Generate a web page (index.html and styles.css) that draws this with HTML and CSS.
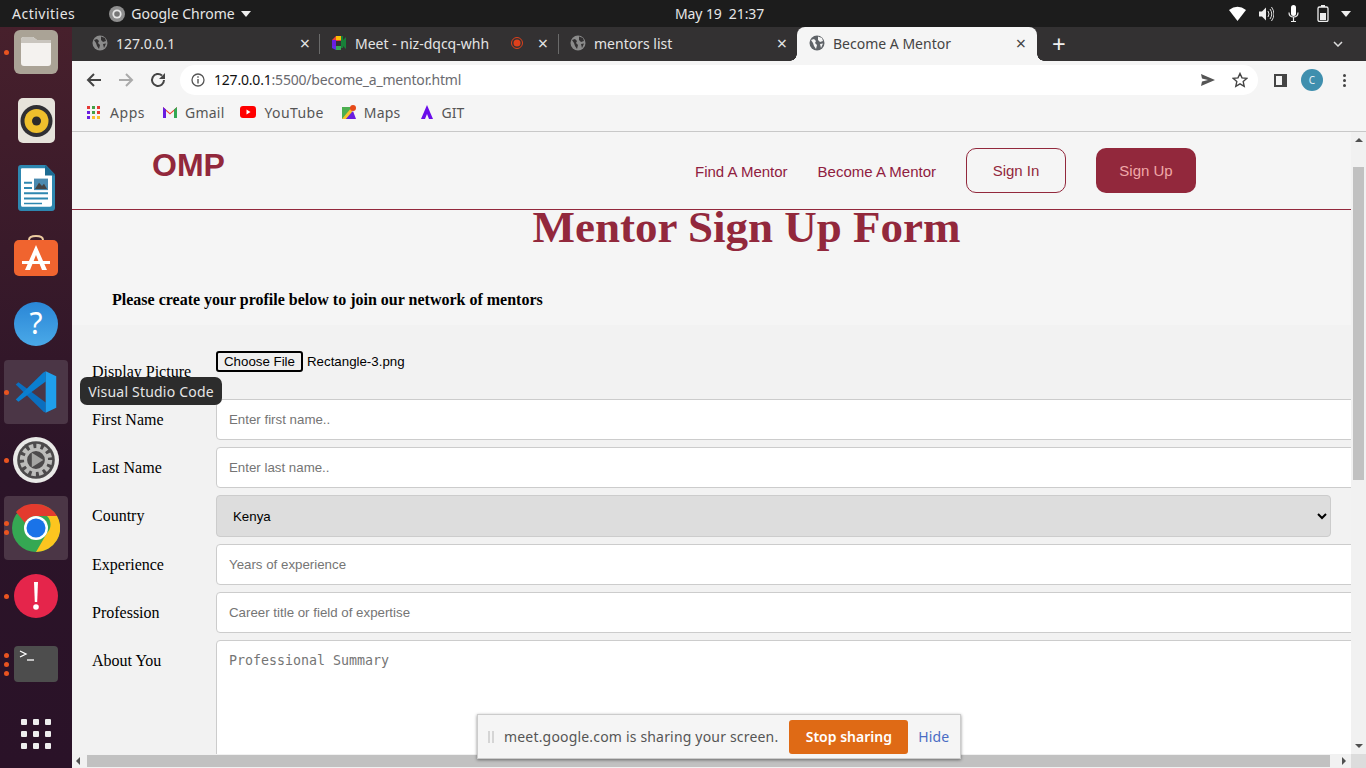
FILE: index.html
```html
<!DOCTYPE html>
<html lang="en">
<head>
<meta charset="utf-8">
<title>Become A Mentor</title>
<link rel="stylesheet" href="styles.css">
</head>
<body>
<header class="topbar">
  <div class="top-left">
    <span class="activities">Activities</span>
    <span class="appname">
      <svg class="chrome-mono" viewBox="0 0 16 16"><circle cx="8" cy="8" r="8" fill="#8e8e8e"/><circle cx="8" cy="8" r="4.6" fill="#e8e8e8"/><circle cx="8" cy="8" r="2.8" fill="#777"/></svg>
      Google Chrome
      <svg class="caret" viewBox="0 0 10 6"><path d="M0 0h10L5 6z" fill="#eee"/></svg>
    </span>
  </div>
  <div class="clock">May 19&nbsp; 21:37</div>
  <div class="tray">
    <svg class="t-wifi" width="17" height="15" viewBox="0 0 17 15"><path d="M0 4Q8.500-2.500 17 4L8.500 15z" fill="#fff"/></svg>
    <svg class="t-vol" width="16" height="18" viewBox="0 0 16 18"><path d="M1 6.500h3L8 2.500v13L4 11.500H1z" fill="#eee"/><path d="M10 6q2 3 0 6M12 4q3.500 5 0 10M13.500 2q5 7 0 14" fill="none" stroke="#ddd" stroke-width="1"/></svg>
    <svg class="t-mic" width="11" height="17" viewBox="0 0 11 17"><rect x="3" y="0" width="5" height="11" rx="2.500" fill="#fff"/><path d="M1 7.500q0 4.500 4.500 4.500T10 7.500M5.500 12V16M3 16.500h5" fill="none" stroke="#eee" stroke-width="1.200"/></svg>
    <svg class="t-bat" width="12" height="17" viewBox="0 0 12 17"><rect x="1" y="2" width="10" height="14.500" rx="1.500" fill="none" stroke="#eee" stroke-width="1.300"/><rect x="4" y="0" width="4" height="2" fill="#eee"/><rect x="3" y="8" width="6" height="7" fill="#eee"/></svg>
    <svg class="caret t-caret" viewBox="0 0 10 6"><path d="M0 0h10L5 6z" fill="#eee"/></svg>
  </div>
</header>

<div class="desktop">
  <nav class="dock">
    <div class="dock-item"><i class="dots"><b></b></i>
      <svg width="44" height="44" viewBox="0 0 44 44"><rect width="44" height="44" rx="6" fill="#aaa396"/><path d="M7 10q0-3 3-3h9l4 3h11q3 0 3 3v20q0 3-3 3H10q-3 0-3-3z" fill="#f4f2ef"/><path d="M7 10q0-3 3-3h9l4 3h14v3H7z" fill="#c9c5be"/></svg>
    </div>
    <div class="dock-item">
      <svg width="37" height="45" viewBox="0 0 37 45"><rect width="37" height="45" rx="5" fill="#e6e3db"/><circle cx="18.500" cy="23" r="16" fill="#2f2f33"/><circle cx="18.500" cy="23" r="12" fill="#eebf2c"/><circle cx="18.500" cy="23" r="4.500" fill="#2b2b2b"/></svg>
    </div>
    <div class="dock-item">
      <svg width="37" height="46" viewBox="0 0 37 44" preserveAspectRatio="none"><path d="M3 0h25l9 9v32q0 3-3 3H3q-3 0-3-3V3q0-3 3-3z" fill="#2e87b0"/><path d="M4 3h23l7 7v28q0 2-2 2H4q-1 0-1-2V4q0-1 1-1z" fill="#fff"/><path d="M27 0l10 9v1H27z" fill="#1c6b92"/><path d="M6 16h8v2H6zM6 21h8v2H6zM6 26h24v2H6zM6 31h24v2H6zM6 36h18v1.500H6z" fill="#2e87b0"/><rect x="16" y="13" width="14" height="11" fill="#4a8ab0"/><path d="M17 23l4-6 3 3 2-2 3 5z" fill="#444"/></svg>
    </div>
    <div class="dock-item">
      <svg width="44" height="44" viewBox="0 0 44 44"><path d="M15 9V6q0-4 7-4t7 4v3" fill="none" stroke="#eccba0" stroke-width="2"/><rect y="6" width="44" height="36" rx="5" fill="#f0642f"/><path d="M22 11L11 36h5l6-15 6 15h5z" fill="#fff"/><path d="M8 27h28v3H8z" fill="#fff"/></svg>
    </div>
    <div class="dock-item">
      <svg width="44" height="44" viewBox="0 0 44 44"><defs><linearGradient id="helpg" x1="0" y1="0" x2="0" y2="1"><stop offset="0" stop-color="#2a86d6"/><stop offset="1" stop-color="#4aa9e8"/></linearGradient></defs><circle cx="22" cy="22" r="22" fill="url(#helpg)"/><text x="22" y="32" class="q-mark">?</text></svg>
    </div>
    <div class="dock-item active"><i class="dots"><b></b></i>
      <svg width="44" height="44" viewBox="0 0 100 100"><path d="M4 33l6-5 62 46v23l-6-3z" fill="#0b6fbf"/><path d="M72 3v23L10 72l-6-5L66 6z" fill="#0a7fd0"/><path d="M72 3l24 11v72L72 97z" fill="#1f9fec"/></svg>
    </div>
    <div class="dock-item"><i class="dots"><b></b></i>
      <svg width="46" height="46" viewBox="0 0 44 44"><circle cx="22" cy="22" r="22" fill="#e9e9e7"/><circle cx="22" cy="22" r="18" fill="#4c4a4b"/><circle cx="22" cy="22" r="13" fill="none" stroke="#bcbcba" stroke-width="5" stroke-dasharray="4 2.800"/><circle cx="22" cy="22" r="10" fill="none" stroke="#bcbcba" stroke-width="3"/><path d="M18 15l11 7-11 7z" fill="#a5a5a3"/></svg>
    </div>
    <div class="dock-item active"><i class="dots"><b></b><b></b></i>
      <svg width="48" height="48" viewBox="0 0 48 48"><circle cx="24" cy="24" r="24" fill="#35a853"/><path d="M24 0a24 24 0 0 1 21 12H24a12 12 0 0 0-11 7L4 8A24 24 0 0 1 24 0z" fill="#e33b2e"/><path d="M45 12a24 24 0 0 1-21 36l11-19a12 12 0 0 0 0-17z" fill="#fcc51f"/><circle cx="24" cy="24" r="12" fill="#fff"/><circle cx="24" cy="24" r="9.500" fill="#1a73e8"/></svg>
    </div>
    <div class="dock-item"><i class="dots"><b></b></i>
      <svg width="44" height="44" viewBox="0 0 44 44"><circle cx="22" cy="22" r="22" fill="#e5254b"/><path d="M20 8h4l-.8 20h-2.400z" fill="#fff"/><circle cx="22" cy="33" r="2.800" fill="#fff"/></svg>
    </div>
    <div class="dock-item"><i class="dots"><b></b><b></b><b></b></i>
      <svg width="44" height="36" viewBox="0 0 44 36"><rect width="44" height="36" rx="4" fill="#4d4d4d"/><path d="M6 5l6 3-6 3" fill="none" stroke="#fff" stroke-width="1.300"/><path d="M13 14h7" stroke="#fff" stroke-width="1.300"/></svg>
    </div>
    <div class="grid-apps"><b></b><b></b><b></b><b></b><b></b><b></b><b></b><b></b><b></b></div>
  </nav>

  <main class="chrome">
    <div class="tabstrip">
      <div class="tab"><svg class="globe"><use href="#globe"/></svg><span class="tab-title">127.0.0.1</span><span class="x">×</span></div>
      <div class="tab sep"><svg class="favicon" viewBox="0 0 16 16"><path d="M1 5l4-4h5v5H1z" fill="#ea4335"/><path d="M1 5h4v6H1z" fill="#6a1de0"/><path d="M1 11h4v4H5l-4-2z" fill="#5f2ce6"/><path d="M5 11h5v4H5z" fill="#34a853"/><path d="M10 1h2v4l3-3v12l-3-3v2h-2z" fill="#188038"/><path d="M5 1h5v4H5z" fill="#fbbc04"/></svg><span class="tab-title">Meet - niz-dqcq-whh</span><svg class="rec" viewBox="0 0 12 12"><circle cx="6" cy="6" r="5.500" fill="none" stroke="#e0401b"/><circle cx="6" cy="6" r="3.500" fill="#e0401b"/></svg><span class="x">×</span></div>
      <div class="tab sep"><svg class="globe"><use href="#globe"/></svg><span class="tab-title">mentors list</span><span class="x">×</span></div>
      <div class="tab current"><svg class="globe"><use href="#globe"/></svg><span class="tab-title">Become A Mentor</span><span class="x">×</span></div>
      <span class="newtab">+</span>
      <svg class="tab-menu" viewBox="0 0 10 6"><path d="M1 1l4 4 4-4" fill="none" stroke="#ddd" stroke-width="1.500"/></svg>
    </div>

    <div class="toolbar">
      <svg class="tool" viewBox="0 0 16 16"><path d="M15 8H2M8 2L2 8l6 6" fill="none" stroke="#444" stroke-width="2"/></svg>
      <svg class="tool" viewBox="0 0 16 16"><path d="M1 8h13M8 2l6 6-6 6" fill="none" stroke="#aaa" stroke-width="2"/></svg>
      <svg class="tool" viewBox="0 0 16 16"><path d="M14 8a6 6 0 1 1-2-4.500" fill="none" stroke="#444" stroke-width="2"/><path d="M15 1v6H9z" fill="#444"/></svg>
      <div class="omnibox">
        <svg class="info" viewBox="0 0 14 14"><circle cx="7" cy="7" r="6" fill="none" stroke="#555" stroke-width="1.300"/><path d="M6.300 6h1.400v4.500H6.300zM6.300 3.300h1.400v1.400H6.300z" fill="#555"/></svg>
        <span class="url"><span class="host">127.0.0.1</span>:5500/become_a_mentor.html</span>
        <svg class="send" viewBox="0 0 16 14"><path d="M1 1l14 6-14 6 1-4.500L8 7 2 5.500z" fill="#555"/></svg>
        <svg class="star" viewBox="0 0 16 16"><path d="M8 1.500l2 4.400 4.700.5-3.500 3.200 1 4.700L8 11.900l-4.200 2.400 1-4.700L1.300 6.400 6 5.900z" fill="none" stroke="#444" stroke-width="1.400"/></svg>
      </div>
      <span class="sidepanel"></span>
      <span class="avatar">C</span>
      <span class="kebab"><b></b><b></b><b></b></span>
    </div>

    <div class="bookmarks">
      <span class="bm bm-apps"><span class="apps-icon"><b></b><b></b><b></b><b></b><b></b><b></b><b></b><b></b><b></b></span>Apps</span>
      <span class="bm bm-gmail"><svg class="bm-ic" viewBox="0 0 16 14"><path d="M1 13V2l7 6 7-6v11h-3V6L8 9.500 4 6v7z" fill="#ea4335"/><path d="M1 13V2l3 2.500V13z" fill="#6a1de0"/><path d="M12 13V4.500L15 2v11z" fill="#34a853"/></svg>Gmail</span>
      <span class="bm bm-you"><svg class="bm-yt" viewBox="0 0 16 12"><rect width="16" height="12" rx="3" fill="#f00"/><path d="M6.500 3.500v5l4-2.500z" fill="#fff"/></svg>YouTube</span>
      <span class="bm bm-maps"><svg class="bm-ic" viewBox="0 0 16 16"><path d="M1 3h10v12H1z" fill="#4caf50"/><path d="M1 15L11 3v5l-6 7z" fill="#fbc02d"/><path d="M5 15l7-8 3 8z" fill="#6a1de0"/><circle cx="12" cy="4" r="3" fill="#e64a19"/></svg>Maps</span>
      <span class="bm bm-git"><svg class="bm-ic" viewBox="0 0 16 16"><path d="M8 1l6 14h-4L8 10l-2 5H2z" fill="#6a0dea"/></svg>GIT</span>
    </div>

    <div class="viewport">
      <div class="page">
        <div class="site-nav">
          <span class="logo">OMP</span>
          <div class="nav-links">
            <a class="nav-link">Find A Mentor</a>
            <a class="nav-link">Become A Mentor</a>
            <a class="btn btn-outline">Sign In</a>
            <a class="btn btn-solid">Sign Up</a>
          </div>
        </div>
        <h1 class="title">Mentor Sign Up Form</h1>
        <h4 class="intro">Please create your profile below to join our network of mentors</h4>
        <form class="form">
          <div class="row row-file">
            <label class="lbl">Display Picture</label>
            <div class="file"><button type="button" class="file-btn">Choose File</button><span class="file-name">Rectangle-3.png</span></div>
          </div>
          <div class="row"><label class="lbl">First Name</label><input class="field" placeholder="Enter first name.."></div>
          <div class="row"><label class="lbl">Last Name</label><input class="field" placeholder="Enter last name.."></div>
          <div class="row"><label class="lbl">Country</label><select class="select"><option>Kenya</option></select></div>
          <div class="row"><label class="lbl">Experience</label><input class="field" placeholder="Years of experience"></div>
          <div class="row"><label class="lbl">Profession</label><input class="field" placeholder="Career title or field of expertise"></div>
          <div class="row"><label class="lbl">About You</label><textarea class="field area" placeholder="Professional Summary"></textarea></div>
        </form>
      </div>
      <div class="vscroll"><span class="arrow-up"></span><span class="vtrack"><span class="vthumb"></span></span><span class="arrow-down"></span></div>
      <div class="hscroll"><span class="arrow-left"></span><span class="hthumb"></span><span class="arrow-right"></span></div>
      <div class="corner"></div>
      <div class="share-bar">
        <span class="grip"></span>
        <span class="share-text">meet.google.com is sharing your screen.</span>
        <span class="stop">Stop sharing</span>
        <span class="hide">Hide</span>
      </div>
    </div>
  </main>
  <div class="tooltip">Visual Studio Code</div>
</div>

<svg class="defs" width="0" height="0"><defs><symbol id="globe" viewBox="0 0 16 16"><circle cx="8" cy="8" r="7.500" fill="currentColor"/><path d="M2 5l3-1 2 2-1 2 2 2-1 4-2-3-1-3zM9 1.500l4 1.500 1 3-3 1-2-2zM11 9l3-.5-2 4.500z" fill="var(--globe-bg)"/></symbol></defs></svg>
</body>
</html>
```
FILE: styles.css
```css
* { box-sizing: border-box; }
html, body { margin: 0; height: 100%; overflow: hidden; }
body { width: 1366px; height: 768px; display: flex; flex-direction: column; font-family: "Noto Sans", sans-serif; background: #1c1c1c; }
.defs { display: block; height: 0; }

.topbar { height: 27px; flex: none; background: #1c1c1c; color: #e6e6e6; font-size: 14px; display: grid; grid-template-columns: 663px auto 1fr; align-items: center; padding: 0 15px 0 12px; }
.top-left { display: flex; align-items: center; gap: 34px; }
.activities { letter-spacing: .5px; }
.appname { display: flex; align-items: center; gap: 6px; }
.chrome-mono { width: 16px; height: 16px; }
.caret { width: 10px; height: 6px; }
.tray { display: flex; justify-content: flex-end; align-items: center; }
.t-vol { margin-left: 12px; }
.t-mic { margin-left: 14px; }
.t-bat { margin-left: 18px; }
.t-caret { margin-left: 12px; }
.clock { font-size: 14px; letter-spacing: -.1px; }

.desktop { flex: 1; display: flex; min-height: 0; position: relative; }
.dock { width: 72px; flex: none; background: linear-gradient(#47202c, #2b1428 60%, #2a1228); display: flex; flex-direction: column; align-items: center; }
.dock-item { width: 64px; height: 64px; margin-bottom: 4px; border-radius: 4px; display: flex; align-items: center; justify-content: center; position: relative; }
.dock-item.active { background: #4b3646; }
.dots { position: absolute; left: 0; top: 0; bottom: 0; display: flex; flex-direction: column; justify-content: center; gap: 4px; }
.dots b { display: block; width: 5px; height: 5px; border-radius: 50%; background: #e95420; }
.dock-item:first-child { height: 50px; margin-bottom: 11px; }
.q-mark { font: 400 30px "Noto Sans", sans-serif; fill: #fff; text-anchor: middle; }
.grid-apps { margin-top: 19px; width: 30px; display: grid; grid-template-columns: repeat(3, 6px); gap: 6px; }
.grid-apps b { width: 6px; height: 6px; border-radius: 1px; background: #eee; }

.chrome { flex: 1; min-width: 0; display: flex; flex-direction: column; background: #f5f5f5; }
.tabstrip { height: 34px; flex: none; background: #333132; display: flex; align-items: stretch; color: #e4e4e4; font-size: 14px; --globe-bg: #333132; padding-left: 8px; position: relative; }
.tab { width: 239px; display: flex; align-items: center; padding: 0 9px 2px 12px; gap: 8px; position: relative; }
.tab:first-child { padding-right: 8px; }
.tab.sep::before { content: ""; position: absolute; left: 0; top: 7px; bottom: 7px; width: 1px; background: #6a6a6a; }
.tab-title { flex: 1; white-space: nowrap; overflow: hidden; }
.globe { width: 16px; height: 16px; color: #8b8b8b; flex: none; }
.favicon { width: 16px; height: 16px; flex: none; }
.rec { width: 12px; height: 12px; flex: none; margin-right: 6px; }
.x { font-size: 18px; line-height: 1; color: #e4e4e4; width: 12px; text-align: center; }
.tab.current { background: #f5f5f5; color: #444; border-radius: 8px 8px 0 0; --globe-bg: #f5f5f5; width: 240px; padding-right: 10px; }
.tab.current::before, .tab.current::after { content: ""; position: absolute; bottom: 0; width: 7px; height: 7px; }
.tab.current::before { left: -7px; background: radial-gradient(circle at 0 0, transparent 6.500px, #f5f5f5 7px); }
.tab.current::after { right: -7px; background: radial-gradient(circle at 100% 0, transparent 6.500px, #f5f5f5 7px); }
.tab.current .globe { color: #5f6368; }
.tab.current .x { color: #444; }
.newtab { font-size: 24px; line-height: 34px; margin-left: 15px; color: #eee; }
.tab-menu { width: 10px; height: 6px; position: absolute; right: 23px; top: 14px; }

.toolbar { height: 36px; flex: none; background: #f5f5f5; display: flex; align-items: center; padding: 2px 0 0 14px; }
.tool { width: 16px; height: 16px; margin-right: 16px; }
.tool:nth-child(3) { margin-right: 14px; }
.omnibox { width: 1078px; height: 30px; background: #fff; border-radius: 15px; display: flex; align-items: center; padding: 0 10px 1px 11px; font-size: 14px; }
.info { width: 14px; height: 14px; margin-right: 9px; }
.url { flex: 1; color: #6b6b70; letter-spacing: -.2px; }
.host { color: #111; }
.send { width: 16px; height: 14px; margin-right: 16px; }
.star { width: 16px; height: 16px; }
.sidepanel { width: 13px; height: 13px; border: 2px solid #444; border-right-width: 5px; margin-left: 16px; }
.avatar { width: 22px; height: 22px; margin-left: 14px; border-radius: 50%; background: #3f8fae; color: #e8f2f6; font-size: 10px; line-height: 22px; text-align: center; }
.kebab { display: flex; flex-direction: column; gap: 2px; margin-left: 20px; }
.kebab b { width: 3px; height: 3px; border-radius: 50%; background: #444; }

.bookmarks { height: 35px; flex: none; background: #f5f5f5; border-bottom: 1px solid #c8c8c8; display: flex; align-items: center; gap: 17px; padding: 0 0 4px 15px; font-size: 14px; color: #555; }
.bm { display: flex; align-items: center; gap: 9px; }
.bm-apps { letter-spacing: .55px; }
.bm-gmail { gap: 7px; letter-spacing: .2px; }
.bm-you { letter-spacing: .4px; gap: 8px; margin-left: -1px; }
.bm-maps { gap: 7px; letter-spacing: .2px; }
.bm-git { gap: 7px; margin-left: 1px; }
.apps-icon { width: 14px; display: grid; grid-template-columns: repeat(3, 3px); gap: 2px; }
.apps-icon b { width: 3px; height: 3px; background: #e53935; }
.apps-icon b:nth-child(2), .apps-icon b:nth-child(5) { background: #43a047; }
.apps-icon b:nth-child(4), .apps-icon b:nth-child(7) { background: #6a1de0; }
.apps-icon b:nth-child(8), .apps-icon b:nth-child(9) { background: #fbc02d; }
.bm-ic { width: 16px; height: 16px; }
.bm-yt { width: 16px; height: 12px; }

.viewport { flex: 1; min-height: 0; position: relative; overflow: hidden; background: #f5f5f5; display: grid; grid-template-columns: 1279px 15px; grid-template-rows: 622px 14px; }
.page { overflow: hidden; font-family: "Liberation Serif", serif; }
.site-nav { height: 78px; display: flex; align-items: center; border-bottom: 1px solid #92283c; padding-left: 80px; }
.logo { font: 700 32px "Liberation Sans", sans-serif; color: #92283c; position: relative; top: -5px; }
.nav-links { margin-left: auto; margin-right: 155px; display: flex; align-items: center; font: 15px "Liberation Sans", sans-serif; color: #8f2040; }
.nav-link { margin-right: 30px; padding-top: 2px; }
.btn { width: 100px; height: 45px; border-radius: 10px; display: flex; align-items: center; justify-content: center; }
.btn-outline { border: 1px solid #92283c; color: #92283c; margin-right: 30px; }
.btn-solid { background: #92283c; color: #f0a8a8; }
.title { margin: -9px 0 0; width: 1349px; font-size: 45px; line-height: 52px; font-weight: 700; color: #92283c; text-align: center; }
.intro { margin: 0; padding: 37px 0 0 40px; height: 72px; font-size: 16px; color: #000; line-height: 19px; }
.form { background: #f2f2f2; padding-top: 20px; }
.row { display: flex; padding: 0 0 0 20px; margin-bottom: 7px; }
.row-file { height: 54px; margin-bottom: 0; }
.lbl { width: 124px; flex: none; font-size: 16px; line-height: 18px; padding-top: 12px; color: #000; }
.row-file .lbl { padding-top: 18px; }
.file { display: flex; align-items: flex-start; font: 13.300px "Liberation Sans", sans-serif; color: #000; margin-top: 6px; }
.file-btn { height: 21px; width: 87px; padding: 0; border: 2px solid #000; border-radius: 3px; background: #efefef; font: 13.300px "Liberation Sans", sans-serif; color: #000; margin-right: 4px; }
.file-name { line-height: 21px; }
.field { flex: none; width: 1200px; height: 41px; background: #fff; border: 1px solid #ccc; border-radius: 4px; padding: 12px; font: 13.300px "Liberation Sans", sans-serif; }
.field::placeholder { color: #757575; }
.area { height: 200px; font: 13.300px "DejaVu Sans Mono", monospace; resize: none; }
.select { flex: none; width: 1115px; height: 42px; background: #ddd; border: 1px solid #ccc; border-radius: 4px; padding: 12px; font: 13.300px "Liberation Sans", sans-serif; color: #000; }

.vscroll { background: #f1f1f1; display: flex; flex-direction: column; align-items: center; }
.arrow-up, .arrow-down, .arrow-left, .arrow-right { width: 0; height: 0; flex: none; border: 4px solid transparent; }
.arrow-up { border-top-width: 0; border-bottom: 4px solid #505050; margin-top: 6px; }
.arrow-down { border-bottom-width: 0; border-top: 4px solid #505050; margin: 6px 0; }
.vtrack { flex: 1; width: 100%; padding: 25px 2px 0; }
.vthumb { display: block; height: 313px; background: #c1c1c1; }
.hscroll { background: #f1f1f1; display: flex; align-items: center; padding: 0 0 0 4px; }
.arrow-left { border-left-width: 0; border-right: 4px solid #505050; }
.arrow-right { border-right-width: 0; border-left: 4px solid #505050; margin: 0 5px 0 auto; }
.hthumb { height: 12px; width: 1243px; background: #c1c1c1; margin-left: 7px; }
.corner { background: #dcdcdc; }

.share-bar { position: absolute; left: 405px; top: 582px; width: 484px; height: 45px; background: #f5f5f5; border: 1px solid #ccc; box-shadow: 0 1px 3px rgba(0,0,0,.45); display: flex; align-items: center; padding-left: 10px; font-size: 14px; color: #555; font-family: "Noto Sans", sans-serif; }
.grip { width: 6px; height: 12px; border-left: 2px solid #d5d5d5; border-right: 2px solid #d5d5d5; margin-right: 10px; }
.share-text { letter-spacing: .18px; }
.stop { width: 119px; height: 34px; margin-left: 11px; border-radius: 3px; background: #df6a15; color: #fff; font-weight: 600; display: flex; align-items: center; justify-content: center; }
.hide { margin-left: 10px; color: #4a6cc4; letter-spacing: .1px; }

.tooltip { position: absolute; left: 80px; top: 350px; height: 28px; width: 142px; border-radius: 7px; background: #2c2c2c; color: #e6e6e6; font-size: 14px; line-height: 29px; text-align: center; white-space: nowrap; letter-spacing: .2px; }
```
